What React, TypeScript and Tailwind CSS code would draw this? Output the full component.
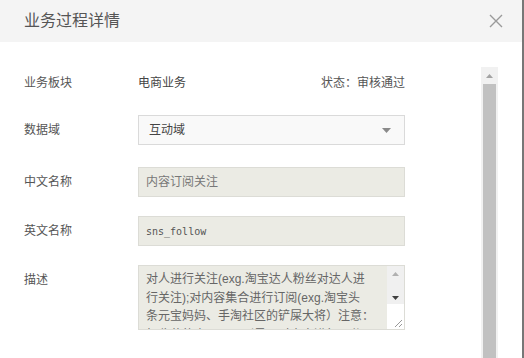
const sans = { fontFamily: '"Liberation Sans", "Noto Sans CJK SC", sans-serif' };

function Row({ label, children, top }: { label: string; children: React.ReactNode; top: string }) {
  return (
    <div className={`flex items-center ${top}`}>
      <div className="w-[114px] shrink-0 text-[12px] text-[#555]">{label}</div>
      {children}
    </div>
  );
}

function ReadonlyInput({ value, mono }: { value: string; mono?: boolean }) {
  return (
    <div className="flex h-[30px] w-[267px] items-center border border-[#dcdcd6] bg-[#ebebe4] pl-[7px]">
      {mono ? (
        <span className="text-[10px] text-[#555]" style={{ fontFamily: '"DejaVu Sans Mono", monospace' }}>
          {value}
        </span>
      ) : (
        <span className="text-[12px] text-[#777]">{value}</span>
      )}
    </div>
  );
}

export default function App() {
  const descLines = [
    "对人进行关注(exg.淘宝达人粉丝对达人进",
    "行关注);对内容集合进行订阅(exg.淘宝头",
    "条元宝妈妈、手淘社区的铲屎大将）注意：",
    "如收藏的商品不区别是否对内容进行区分"
  ];

  return (
    <div className="flex h-[358px] w-[524px] flex-col overflow-hidden border-r-2 border-[#777] bg-white" style={sans}>
      <div className="flex h-[42px] shrink-0 items-center justify-between bg-[#f4f4f4] pl-6 pr-[18px]">
        <div className="text-[16px] text-[#555]">业务过程详情</div>
        <svg width="14" height="14" viewBox="0 0 14 14" className="mr-[1px]">
          <path d="M1 1 L13 13 M13 1 L1 13" stroke="#9a9a9a" strokeWidth="1.4" fill="none" />
        </svg>
      </div>

      <div className="flex min-h-0 flex-1">
        <div className="flex-1 pl-6 pt-[31px]">
          <div className="flex h-[20px] w-[381px] items-center text-[12px]">
            <div className="w-[114px] shrink-0 text-[#555]">业务板块</div>
            <div className="flex-1 text-[#444]">电商业务</div>
            <div className="text-[#555]">状态：审核通过</div>
          </div>

          <Row label="数据域" top="mt-[22px]">
            <div className="flex h-[30px] w-[267px] items-center justify-between border border-[#dadada] bg-[#f9f9f9] pl-[10px] pr-[13px]">
              <span className="text-[12px] text-[#444]">互动域</span>
              <svg width="9" height="5" viewBox="0 0 9 5">
                <path d="M0 0 L9 0 L4.5 5 Z" fill="#8a8a8a" />
              </svg>
            </div>
          </Row>

          <Row label="中文名称" top="mt-[22px]">
            <ReadonlyInput value="内容订阅关注" />
          </Row>

          <Row label="英文名称" top="mt-[19px]">
            <ReadonlyInput value="sns_follow" mono />
          </Row>

          <div className="mt-[19px] flex items-start">
            <div className="w-[114px] shrink-0 pt-[5px] text-[12px] leading-[20px] text-[#555]">描述</div>
            <div className="flex h-[65px] w-[267px] overflow-hidden border border-[#dcdcd6] bg-[#ebebe4]">
              <div className="flex-1 overflow-hidden pl-[7px] pt-[4px] text-[12px] leading-[18.5px] text-[#666]">
                {descLines.map((line) => (
                  <div key={line} className="whitespace-nowrap">
                    {line}
                  </div>
                ))}
              </div>
              <div className="flex w-[17px] shrink-0 flex-col bg-[#f0f0f0]">
                <div className="flex h-[38px] flex-col items-center justify-between pb-[4px] pt-[6px]">
                  <svg width="7" height="4" viewBox="0 0 7 4">
                    <path d="M0 4 L7 4 L3.5 0 Z" fill="#b0b0b0" />
                  </svg>
                  <svg width="7" height="4" viewBox="0 0 7 4">
                    <path d="M0 0 L7 0 L3.5 4 Z" fill="#404040" />
                  </svg>
                </div>
                <div className="flex flex-1 items-end justify-end bg-white p-[2px]">
                  <svg width="8" height="8" viewBox="0 0 8 8">
                    <path d="M8 1 L1 8 M8 5 L5 8" stroke="#999" strokeWidth="1" fill="none" />
                  </svg>
                </div>
              </div>
            </div>
          </div>
        </div>

        <div className="mr-[24px] mt-[25px] flex w-[17px] shrink-0 flex-col bg-[#f1f1f1]">
          <div className="flex h-[17px] items-center justify-center">
            <svg width="7" height="4" viewBox="0 0 7 4">
              <path d="M0 4 L7 4 L3.5 0 Z" fill="#a3a3a3" />
            </svg>
          </div>
          <div className="mx-[2px] flex-1 bg-[#c1c1c1]" />
        </div>
      </div>
    </div>
  );
}
